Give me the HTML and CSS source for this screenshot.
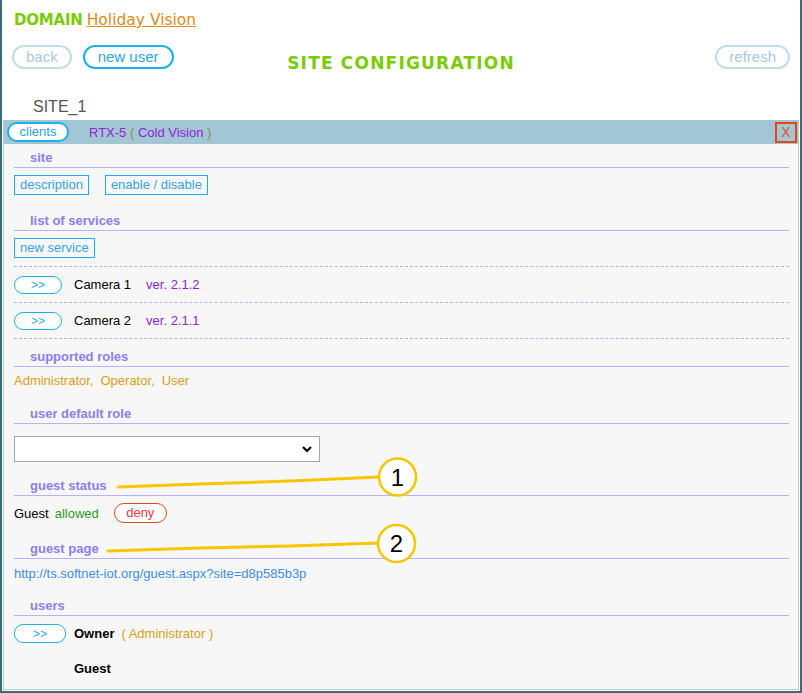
FILE: index.html
```html
<!DOCTYPE html>
<html lang="en">
<head>
<meta charset="utf-8">
<title>Site configuration</title>
<link rel="stylesheet" href="styles.css">
</head>
<body>
<div class="window">
  <header class="top">
    <div class="domain"><span class="dom-label">DOMAIN</span><a class="dom-name" href="#">Holiday Vision</a></div>
    <div class="toolbar">
      <div class="tb-left"><button class="pill pill-off">back</button><button class="pill pill-on">new user</button></div>
      <h1 class="title">SITE CONFIGURATION</h1>
      <div class="tb-right"><button class="pill pill-off">refresh</button></div>
    </div>
    <div class="site-name">SITE_1</div>
  </header>

  <section class="panel">
    <div class="bar">
      <button class="clients">clients</button>
      <span class="client-name">RTX-5 <span class="paren">(</span> Cold Vision <span class="paren">)</span></span>
      <button class="close">X</button>
    </div>

    <div class="content">
      <h2 class="h h-site">site</h2>
      <div class="btn-row">
        <button class="box-btn">description</button>
        <button class="box-btn">enable / disable</button>
      </div>

      <h2 class="h h-services">list of services</h2>
      <div class="new-service"><button class="box-btn">new service</button></div>
      <div class="svc-row"><button class="arrow-pill">&gt;&gt;</button><span class="svc-name">Camera 1</span><span class="ver">ver. 2.1.2</span></div>
      <div class="svc-row"><button class="arrow-pill">&gt;&gt;</button><span class="svc-name">Camera 2</span><span class="ver">ver. 2.1.1</span></div>

      <h2 class="h h-roles">supported roles</h2>
      <div class="roles"><span class="role">Administrator,</span><span class="role">Operator,</span><span class="role">User</span></div>

      <h2 class="h h-default">user default role</h2>
      <div class="select-wrap">
        <select class="role-select"><option></option></select>
        <svg class="chev" width="10" height="7" viewBox="0 0 10 7"><path d="M1 1 L5 5 L9 1" fill="none" stroke="#000" stroke-width="2.2"/></svg>
      </div>

      <h2 class="h h-gstatus">guest status</h2>
      <div class="guest-row"><span class="g-label">Guest</span><span class="allowed">allowed</span><button class="deny">deny</button></div>

      <h2 class="h h-gpage">guest page</h2>
      <a class="url" href="#">http://ts.softnet-iot.org/guest.aspx?site=d8p585b3p</a>

      <h2 class="h h-users">users</h2>
      <div class="user-row"><button class="arrow-pill wide">&gt;&gt;</button><span class="user-name">Owner</span><span class="user-role">( Administrator )</span></div>
      <div class="user-guest">Guest</div>
    </div>
  </section>

  <svg class="annot" width="802" height="693" viewBox="0 0 802 693">
    <path d="M118 487 L200 484 L290 481 L379 477" fill="none" stroke="#f7c600" stroke-width="3" stroke-linecap="round"/>
    <circle cx="397.5" cy="477" r="18.5" fill="#fff" stroke="#f7c600" stroke-width="2.5"/>
    <text x="397.5" y="485.5" text-anchor="middle" class="annot-num">1</text>
    <path d="M108 551 L200 548 L290 546 L379 543" fill="none" stroke="#f7c600" stroke-width="3" stroke-linecap="round"/>
    <circle cx="396.5" cy="543.5" r="18.5" fill="#fff" stroke="#f7c600" stroke-width="2.5"/>
    <text x="396.5" y="552" text-anchor="middle" class="annot-num">2</text>
  </svg>
</div>
</body>
</html>
```

FILE: styles.css
```css
* { box-sizing: border-box; }
html, body { margin: 0; padding: 0; background: #fff; }
body { font-family: "Liberation Sans", Arial, sans-serif; font-size: 13px; color: #000; }

.window {
  position: relative;
  width: 802px;
  height: 693px;
  border: 2px solid #3a6b7b;
  border-top: none;
  background: #fff;
  display: flex;
  flex-direction: column;
}

button { font-family: "Liberation Sans", Arial, sans-serif; cursor: pointer; margin: 0; }

/* top header */
.top { height: 120px; padding: 10px 10px 0 10px; flex: none; }
.domain { height: 20px; line-height: 20px; display: flex; align-items: center; padding-left: 2px; }
.dom-label { font-family: "DejaVu Sans", Verdana, sans-serif; font-weight: bold; font-size: 15px; color: #7acc00; letter-spacing: -0.2px; }
.dom-name { font-family: "DejaVu Sans", Verdana, sans-serif; font-size: 15.5px; color: #e08a20; margin-left: 4px; text-decoration: underline; }

.toolbar { margin-top: 15px; display: grid; grid-template-columns: 1fr auto 1fr; align-items: start; }
.tb-left { display: flex; gap: 11px; }
.tb-right { display: flex; justify-content: flex-end; }
.pill { height: 24px; border-radius: 12px; padding: 0 12px; font-size: 15px; background: #fff; line-height: 20px; }
.pill-off { border: 2px solid #c0dde9; color: #a9c9da; }
.pill-on { border: 2px solid #1ab0ea; color: #2fa6e6; padding: 0 13px; }
.title { margin: 0; padding-top: 9px; line-height: 18px; font-family: "DejaVu Sans", Verdana, sans-serif; font-weight: bold; font-size: 17px; letter-spacing: 1.2px; color: #7acc00; }

.site-name { margin-top: 27px; margin-left: 21px; line-height: 16px; font-size: 16px; color: #555; }

/* panel */
.panel {
  flex: 1;
  margin: 0 0 1px 1px;
  width: 796px;
  border: 1px solid #b9cdd5;
  border-top: none;
  background: #f7f7f7;
}
.bar { height: 24px; background: #a2c6d4; display: flex; align-items: center; padding: 0 1px 0 3px; }
.clients { height: 20px; width: 62px; border: 2px solid #1fb0ea; border-radius: 10px; background: #fff; color: #2b9fe2; font-size: 13px; padding: 0; line-height: 16px; }
.client-name { margin-left: 20px; color: #9222d6; font-size: 13px; }
.paren { color: #8a8a58; }
.close { margin-left: auto; width: 22px; height: 21px; border: 2px solid #ea4412; background: transparent; color: #f04a28; font-size: 14px; padding: 0; line-height: 17px; }

.content { padding: 0 9px 0 10px; }
.h { margin: 0; padding: 1px 16px 1px; line-height: 16px; font-size: 13px; font-weight: bold; color: #8a7ef0; border-bottom: 1px solid #b8b2f2; }
.h-site { margin-top: 5px; }
.h-services { margin-top: 17px; }
.h-roles { margin-top: 9px; }
.h-default { margin-top: 16px; }
.h-gstatus { margin-top: 15px; }
.h-gpage { margin-top: 17px; }
.h-users { margin-top: 15px; }

.btn-row { margin-top: 7px; display: flex; gap: 16px; height: 20px; }
.box-btn { height: 20px; border: 1px solid #16b0ee; background: transparent; color: #3aa2e4; font-size: 13px; padding: 0 5px; line-height: 18px; }

.new-service { margin-top: 7px; padding-bottom: 8px; border-bottom: 1px dashed #b8b2f2; }
.new-service .box-btn { display: block; }

.svc-row { height: 36px; display: flex; align-items: center; border-bottom: 1px dashed #b8b2f2; }
.arrow-pill { width: 48px; height: 18px; border: 1px solid #1fb0ea; border-radius: 9px; background: #fff; color: #2fa6e6; font-size: 12px; padding: 0; line-height: 16px; flex: none; }
.arrow-pill.wide { width: 52px; height: 19px; }
.svc-name { margin-left: 12px; }
.ver { margin-left: 15px; color: #9222d6; }

.roles { margin-top: 6px; line-height: 16px; color: #d8a020; display: flex; gap: 7px; }

.select-wrap { position: relative; margin-top: 12px; width: 306px; height: 26px; }
.role-select { appearance: none; -webkit-appearance: none; width: 306px; height: 26px; border: 1px solid #a5a5a5; border-radius: 0; background: #fff; font-size: 13px; padding: 0 4px; }
.chev { position: absolute; right: 8px; top: 10px; pointer-events: none; }

.guest-row { margin-top: 7px; height: 20px; display: flex; align-items: center; }
.allowed { margin-left: 6px; color: #2e9a2e; }
.deny { margin-left: 15px; width: 53px; height: 20px; border: 1px solid #e44a1c; border-radius: 10px; background: #fff; color: #e8383a; font-size: 13px; padding: 0; line-height: 18px; }

.url { display: block; margin-top: 7px; line-height: 16px; color: #3c8ee8; text-decoration: none; }

.user-row { margin-top: 8px; height: 19px; display: flex; align-items: center; }
.user-name { margin-left: 8px; font-weight: bold; }
.user-role { margin-left: 7px; color: #d8a020; }
.user-guest { margin-top: 18px; padding-left: 60px; line-height: 16px; font-weight: bold; }

.annot { position: absolute; top: 0; left: -2px; pointer-events: none; }
.annot-num { font-family: "Liberation Sans", Arial, sans-serif; font-size: 24px; fill: #000; }
```
